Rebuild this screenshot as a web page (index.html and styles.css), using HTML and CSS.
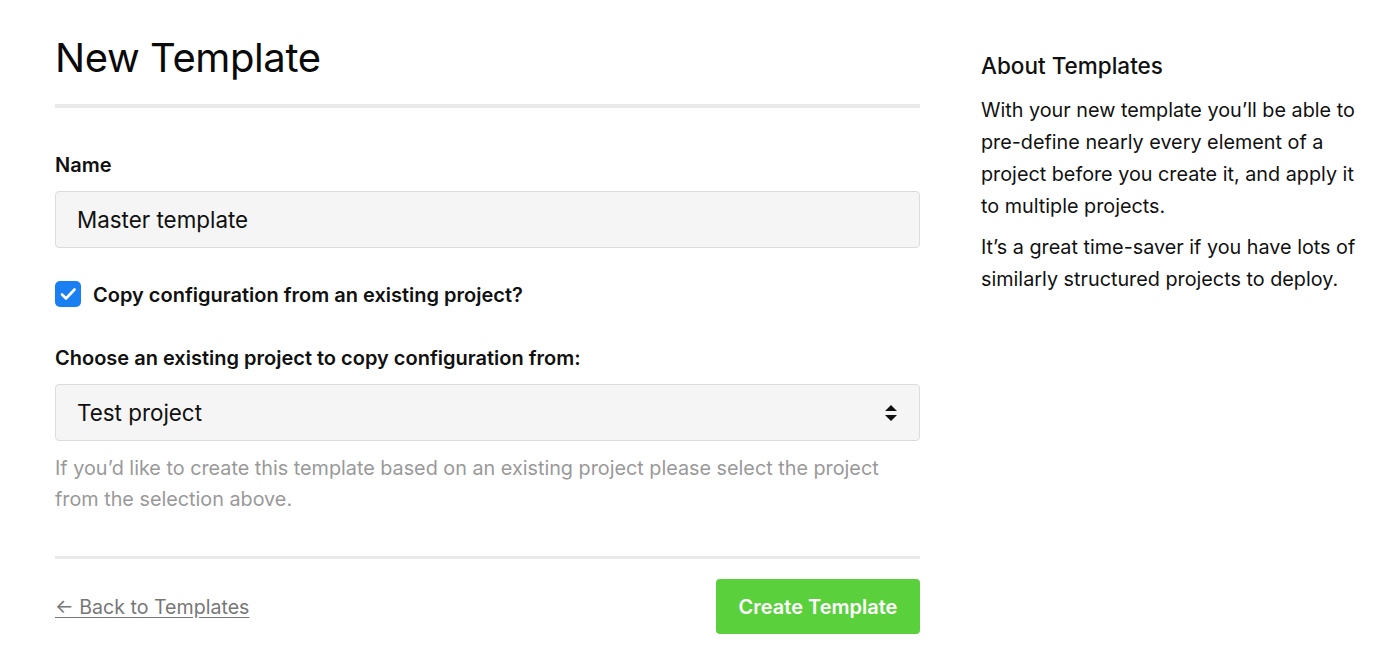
FILE: index.html
```html
<!DOCTYPE html>
<html lang="en">
<head>
<meta charset="utf-8">
<title>New Template</title>
<link rel="stylesheet" href="styles.css">
</head>
<body>
<div class="page">
  <main class="main">
    <h1 class="title">New Template</h1>
    <form class="form">
      <div class="field">
        <label class="label" for="name">Name</label>
        <div class="input">Master template</div>
      </div>
      <div class="check-row">
        <span class="checkbox">
          <svg viewBox="0 0 26 26" width="26" height="26"><path d="M7 13.5l4 4 8.5-9" fill="none" stroke="#fff" stroke-width="2.6" stroke-linecap="round" stroke-linejoin="round"/></svg>
        </span>
        <span class="check-label">Copy configuration from an existing project?</span>
      </div>
      <div class="field">
        <label class="label">Choose an existing project to copy configuration from:</label>
        <div class="input select">
          <span>Test project</span>
          <svg class="arrows" viewBox="0 0 14 18" width="14" height="18"><path d="M7 1L13 7H1z M7 17L1 11H13z" fill="#111"/></svg>
        </div>
        <p class="help">If you’d like to create this template based on an existing project please select the project from the selection above.</p>
      </div>
      <div class="footer">
        <a class="back" href="#">← Back to Templates</a>
        <button type="button" class="btn">Create Template</button>
      </div>
    </form>
  </main>
  <aside class="side">
    <h2 class="side-title">About Templates</h2>
    <p class="side-text">With your new template you’ll be able to pre-define nearly every element of a project before you create it, and apply it to multiple projects.</p>
    <p class="side-text">It’s a great time-saver if you have lots of similarly structured projects to deploy.</p>
  </aside>
</div>
</body>
</html>
```

FILE: styles.css
```css
* { box-sizing: border-box; }
body {
  margin: 0;
  background: #fff;
  color: #111;
  font-family: Inter, "Noto Sans", "Liberation Sans", sans-serif;
}
.page {
  display: flex;
  gap: 61px;
  padding: 0 0 0 55px;
}
.main {
  width: 865px;
  flex: none;
}
.title {
  margin: 0;
  padding-top: 34px;
  font-size: 40px;
  font-weight: 400;
  line-height: 48px;
  letter-spacing: -0.4px;
  padding-bottom: 22px;
  border-bottom: 4px solid #e9e9e9;
  color: #0a0a0a;
}
.form { padding-top: 45px; }
.field { display: flex; flex-direction: column; }
.label {
  font-size: 20px;
  font-weight: 600;
  line-height: 24px;
  margin-bottom: 14px;
}
.input {
  height: 57px;
  background: #f5f5f5;
  border: 1px solid #dcdcdc;
  border-radius: 4px;
  padding: 0 21px;
  display: flex;
  align-items: center;
  font-size: 22.4px;
  color: #111;
}
.select { justify-content: space-between; }
.check-row {
  display: flex;
  align-items: center;
  gap: 12px;
  height: 26px;
  margin: 33px 0 39px;
}
.checkbox {
  width: 26px;
  height: 26px;
  border-radius: 5px;
  background: #1a7ff0;
  display: flex;
}
.check-label {
  font-size: 20px;
  font-weight: 600;
  padding-top: 2px;
}
.help {
  margin: 12px 0 0;
  font-size: 19.8px;
  line-height: 31px;
  color: #999;
}
.footer {
  margin-top: 41px;
  border-top: 3px solid #e9e9e9;
  padding-top: 20px;
  display: flex;
  justify-content: space-between;
  align-items: center;
}
.back {
  color: #777;
  font-size: 19.6px;
  text-decoration: underline;
  text-underline-offset: 3px;
}
.btn {
  width: 204px;
  height: 55px;
  border: none;
  border-radius: 4px;
  background: #5ad13c;
  color: #fff;
  font-family: inherit;
  font-size: 20px;
  font-weight: 600;
}
.side {
  width: 385px;
  flex: none;
  padding-top: 52px;
}
.side-title {
  margin: 0 0 14px;
  font-size: 22.5px;
  font-weight: 500;
  line-height: 28px;
}
.side-text {
  margin: 0 0 9px;
  font-size: 19.8px;
  line-height: 32px;
}
```
